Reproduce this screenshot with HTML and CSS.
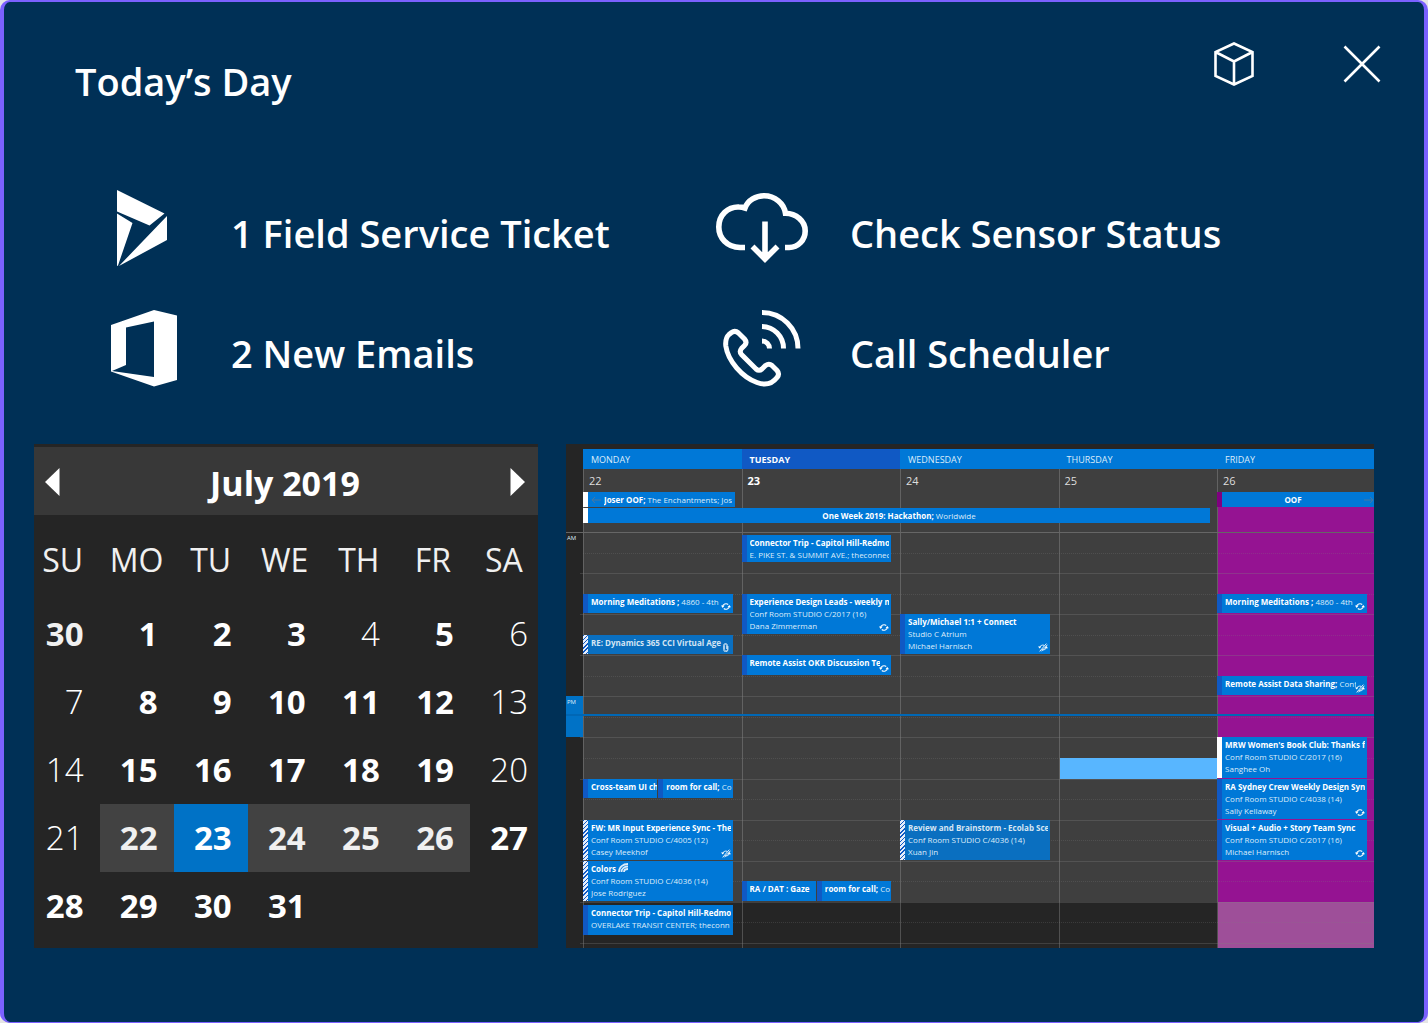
FILE: index.html
```html
<!DOCTYPE html>
<html lang="en">
<head>
<meta charset="utf-8">
<meta name="viewport" content="width=device-width, initial-scale=1">
<title>Today’s Day</title>
<link rel="stylesheet" href="styles.css">
</head>
<body>
<svg class="sprite" aria-hidden="true">
  <symbol id="sync" viewBox="0 0 18 16"><path d="M3 8a6 5 0 0 1 10-3.500M15 8a6 5 0 0 1-10 3.500" fill="none" stroke="currentColor" stroke-width="2"/><path d="M0 6h6.500L3 10.500zM11.500 9.500H18L15 5.500z" fill="currentColor"/></symbol>
  <symbol id="nosync" viewBox="0 0 18 16"><path d="M3 8a6 5 0 0 1 8-4M15 8a6 5 0 0 1-8 4M3 15 15 1M6 15 17 3" fill="none" stroke="currentColor" stroke-width="1.600"/><path d="M0 6h6L3 10zM12 9.500h6L15 5.500z" fill="currentColor"/></symbol>
  <symbol id="clip" viewBox="0 0 12 18"><path d="M9 5v8a3 3 0 0 1-6 0V4.500a2 2 0 0 1 4 0V12M9 5a4 4 0 0 0-8 0v8a4.500 4.500 0 0 0 9 0V6" fill="none" stroke="currentColor" stroke-width="1.300"/></symbol>
</svg>
<main class="card">
  <header class="card-head">
    <h1>Today’s Day</h1>
    <div class="tools">
      <button type="button" aria-label="Show model"><svg width="44" height="44" viewBox="0 0 44 44"><path d="M22 1.500 40.500 10v24L22 42.500 3.500 34V10zM3.500 10 22 19.500 40.500 10M22 19.500v23" fill="none" stroke="currentColor" stroke-width="2.600"/></svg></button>
      <button type="button" aria-label="Close"><svg width="44" height="44" viewBox="0 0 44 44"><path d="M4.500 4.500 39.500 39.500M39.500 4.500 4.500 39.500" fill="none" stroke="currentColor" stroke-width="2.600"/></svg></button>
    </div>
  </header>

  <nav class="actions" aria-label="Tasks">
    <a href="#ticket"><svg viewBox="0 0 96 96"><path d="M22 10 69.500 33.500 54.500 45.500 22 31.500zM22 33.500 37.500 43 23 85.500 22 86zM72 36v24L24 86z" fill="currentColor"/></svg><span>1 Field Service Ticket</span></a>
    <a href="#sensor"><svg viewBox="0 0 96 96"><path d="M31 67.500H26C13 67 4.800 58 4.800 47 4.800 35 14 26.500 25 27c2.500 0 4 .300 6 1 3-8 11-12.200 19-12.200 11 0 20 7.500 21.500 17.500C82 33.500 91.200 41 91.200 51c0 9-7.200 16.500-16 16.500H71" fill="none" stroke="currentColor" stroke-width="5.600"/><path d="M51 41.500V79M38.500 66.500 51 79 63.500 66.500" fill="none" stroke="currentColor" stroke-width="5.600"/></svg><span>Check Sensor Status</span></a>
    <a href="#mail"><svg viewBox="0 0 96 96"><path fill-rule="evenodd" d="M16 25 59 10 82 15.500V80L59 86.500 16 71.500zM31 27.500V65L17 71 59 77V21.500z" fill="currentColor"/></svg><span>2 New Emails</span></a>
    <a href="#call"><svg viewBox="0 0 96 96"><path d="M15 34.500 17.500 32.500q3.500-2.500 7 .500L30.500 39q3 3.500 0 6.500L27.500 48.500q-2.500 3 0 6L42 69q3 2.500 6 0L51.500 65.500q3.500-2.500 6.500 0L63 70.500q3 3.500 0 7C58 84 51 85.500 43 82.500 28 77 14 61 11.800 46 11.300 41 12.300 37 15 34.500z" fill="none" stroke="currentColor" stroke-width="5"/><path d="M48 12.500A36 36 0 0 1 84 48.500M48 26.500A22 22 0 0 1 69.500 48.500M48 41a7.500 7.500 0 0 1 7.500 7.500" fill="none" stroke="currentColor" stroke-width="5"/></svg><span>Call Scheduler</span></a>
  </nav>

  <div class="panels">
    <section class="month" aria-label="Month">
      <div class="month-head">
        <button type="button" aria-label="Previous month"><svg width="16" height="28" viewBox="0 0 16 28"><path d="M15.500 0v28L1 14z" fill="currentColor"/></svg></button>
        <h2>July 2019</h2>
        <button type="button" aria-label="Next month"><svg width="16" height="28" viewBox="0 0 16 28"><path d="M.500 0v28L15 14z" fill="currentColor"/></svg></button>
      </div>
      <table>
        <colgroup><col class="edge"><col class="mid"><col class="mid"><col class="mid"><col class="mid"><col class="mid"><col></colgroup>
        <thead><tr><th>SU</th><th>MO</th><th>TU</th><th>WE</th><th>TH</th><th>FR</th><th>SA</th></tr></thead>
        <tbody>
          <tr><td class="busy dim">30</td><td class="busy">1</td><td class="busy">2</td><td class="busy">3</td><td>4</td><td class="busy">5</td><td>6</td></tr>
          <tr><td>7</td><td class="busy">8</td><td class="busy">9</td><td class="busy">10</td><td class="busy">11</td><td class="busy">12</td><td>13</td></tr>
          <tr><td>14</td><td class="busy">15</td><td class="busy">16</td><td class="busy">17</td><td class="busy">18</td><td class="busy">19</td><td>20</td></tr>
          <tr><td>21</td><td class="busy week">22</td><td class="busy today">23</td><td class="busy week">24</td><td class="busy week">25</td><td class="busy week">26</td><td class="busy">27</td></tr>
          <tr><td class="busy">28</td><td class="busy">29</td><td class="busy">30</td><td class="busy">31</td><td></td><td></td><td></td></tr>
        </tbody>
      </table>
    </section>

    <section class="schedule" aria-label="Week">
      <div class="week-head">
        <i class="bg mon"></i><i class="bg tue"></i><i class="bg wed"></i><i class="bg thu"></i><i class="bg fri away"></i>
        <h3 class="mon">MONDAY</h3><h3 class="tue now">TUESDAY</h3><h3 class="wed">WEDNESDAY</h3><h3 class="thu">THURSDAY</h3><h3 class="fri">FRIDAY</h3>
        <p class="date mon">22</p><p class="date tue now">23</p><p class="date wed">24</p><p class="date thu">25</p><p class="date fri">26</p>
        <div class="allday first mon free"><svg width="10" height="8" viewBox="0 0 10 8"><path d="M10 4H1M4 1 1 4l3 3" fill="none" stroke="currentColor"/></svg><p><b>Joser OOF;</b> The Enchantments; Jos</p></div>
        <div class="allday second long free"><p><b>One Week 2019: Hackathon;</b> Worldwide</p></div>
        <div class="allday first fri oof"><p><b>OOF</b></p><svg width="10" height="8" viewBox="0 0 10 8"><path d="M0 4h9M6 1l3 3-3 3" fill="none" stroke="currentColor"/></svg></div>
      </div>
      <div class="week-body">
        <i class="bg mon"></i><i class="bg tue"></i><i class="bg wed"></i><i class="bg thu"></i><i class="bg fri away"></i>
        <i class="off mon"></i><i class="off tue"></i><i class="off wed"></i><i class="off thu"></i><i class="off fri away"></i>
        <i class="hour first-hour" style="--at:1"></i><i class="hour" style="--at:13"></i><i class="hour" style="--at:25"></i><i class="hour" style="--at:37"></i><i class="hour" style="--at:49"></i><i class="hour" style="--at:61"></i><i class="hour" style="--at:73"></i><i class="hour" style="--at:85"></i><i class="hour" style="--at:97"></i><i class="hour" style="--at:109"></i><i class="hour" style="--at:121"></i>
        <i class="half" style="--at:7"></i><i class="half" style="--at:19"></i><i class="half" style="--at:31"></i><i class="half" style="--at:43"></i><i class="half" style="--at:55"></i><i class="half" style="--at:67"></i><i class="half" style="--at:79"></i><i class="half" style="--at:91"></i><i class="half" style="--at:103"></i><i class="half" style="--at:115"></i>
        <span class="time" style="--at:1;--len:12">AM</span>
        <span class="time current" style="--at:49;--len:12">PM</span>
        <i class="slot thu" style="--at:67;--len:6"></i>
        <i class="nowline" style="--at:54"></i>

        <article class="event line mon" style="--at:19;--len:6"><p><b>Morning Meditations ;</b> 4860 - 4th</p><svg><use href="#sync"/></svg></article>
        <article class="event line mon tentative faded" style="--at:31;--len:6"><p><b>RE: Dynamics 365 CCI Virtual Age</b></p><svg><use href="#clip"/></svg></article>
        <div class="pair mon" style="--at:73;--len:6">
          <article class="event"><p><b>Cross-team UI ch</b></p></article>
          <article class="event"><p><b>room for call;</b> Co</p></article>
        </div>
        <article class="event mon tentative" style="--at:85;--len:12"><p><b>FW: MR Input Experience Sync - The</b></p><p>Conf Room STUDIO C/4005 (12)</p><p>Casey Meekhof</p><svg><use href="#nosync"/></svg></article>
        <article class="event mon tentative" style="--at:97;--len:12"><p><b>Colors</b> <svg class="rainbow" viewBox="0 0 11 10"><path d="M1 9C1 4 5 1 10 1M3.500 9C3.500 6 6 3.500 10 3.500M6 9c0-2 2-3 4-3" fill="none" stroke="currentColor" stroke-width="1.800"/></svg></p><p>Conf Room STUDIO C/4036 (14)</p><p>Jose Rodriguez</p></article>
        <article class="event mon" style="--at:110;--len:9"><p><b>Connector Trip - Capitol Hill-Redmo</b></p><p>OVERLAKE TRANSIT CENTER; theconn</p></article>

        <article class="event tue" style="--at:2;--len:8"><p><b>Connector Trip - Capitol Hill-Redmo</b></p><p>E. PIKE ST. &amp; SUMMIT AVE.; theconnec</p></article>
        <article class="event tue" style="--at:19;--len:12"><p><b>Experience Design Leads - weekly m</b></p><p>Conf Room STUDIO C/2017 (16)</p><p>Dana Zimmerman</p><svg><use href="#sync"/></svg></article>
        <article class="event line tue" style="--at:37;--len:6"><p><b>Remote Assist OKR Discussion Tea</b></p><svg><use href="#sync"/></svg></article>
        <div class="pair tue" style="--at:103;--len:6">
          <article class="event"><p><b>RA / DAT : Gaze</b></p></article>
          <article class="event"><p><b>room for call;</b> Co</p></article>
        </div>

        <article class="event wed" style="--at:25;--len:12"><p><b>Sally/Michael 1:1 + Connect</b></p><p>Studio C Atrium</p><p>Michael Harnisch</p><svg><use href="#nosync"/></svg></article>
        <article class="event wed tentative faded" style="--at:85;--len:12"><p><b>Review and Brainstorm - Ecolab Scer</b></p><p>Conf Room STUDIO C/4036 (14)</p><p>Xuan Jin</p></article>

        <article class="event line fri" style="--at:19;--len:6"><p><b>Morning Meditations ;</b> 4860 - 4th</p><svg><use href="#sync"/></svg></article>
        <article class="event line fri" style="--at:43;--len:6"><p><b>Remote Assist Data Sharing;</b> Conf</p><svg><use href="#nosync"/></svg></article>
        <article class="event fri free" style="--at:61;--len:12"><p><b>MRW Women's Book Club: Thanks f</b></p><p>Conf Room STUDIO C/2017 (16)</p><p>Sanghee Oh</p></article>
        <article class="event fri" style="--at:73;--len:12"><p><b>RA Sydney Crew Weekly Design Sync</b></p><p>Conf Room STUDIO C/4038 (14)</p><p>Sally Kellaway</p><svg><use href="#sync"/></svg></article>
        <article class="event fri" style="--at:85;--len:12"><p><b>Visual + Audio + Story Team Sync</b></p><p>Conf Room STUDIO C/2017 (16)</p><p>Michael Harnisch</p><svg><use href="#sync"/></svg></article>
      </div>
    </section>
  </div>
</main>
</body>
</html>
```
FILE: styles.css
```css
* { box-sizing: border-box; }
body {
  margin: 0;
  background: #e5e5e5;
  color: #fff;
  font-family: "Open Sans", "Noto Sans", sans-serif;
}
h1, h2, h3, p { margin: 0; font-weight: inherit; font-size: inherit; }
button { padding: 0; border: 0; background: none; color: inherit; font: inherit; cursor: pointer; }
svg { display: block; flex: none; }
.sprite { position: absolute; width: 0; height: 0; }

.card {
  min-height: 100vh;
  padding: 40px 50px 73px 30px;
  border: solid #7b61ff;
  border-width: 2px 4px 1px;
  border-radius: 10px;
  background: #003056;
}
.card-head { display: flex; justify-content: space-between; padding-left: 41px; }
h1 { padding-top: 11px; font-size: 38px; line-height: 56px; font-weight: 600; }
.tools { display: flex; gap: 84px; align-self: flex-start; margin-right: -10px; }

.actions {
  display: grid;
  grid-template-columns: 619fr 660fr;
  row-gap: 24px;
  margin-top: 71px;
  padding-left: 61px;
}
.actions a {
  display: flex;
  align-items: center;
  gap: 40px;
  color: inherit;
  font-size: 38px;
  line-height: 56px;
  font-weight: 600;
  text-decoration: none;
}
.actions svg { width: 96px; height: 96px; }
.actions span { padding-top: 10px; white-space: nowrap; }

.panels {
  display: grid;
  grid-template-columns: minmax(0, 504fr) minmax(0, 808fr);
  gap: 28px;
  margin-top: 48px;
}

.month { padding: 3px 0 8px; background: #252525; }
.month-head {
  display: flex;
  align-items: center;
  justify-content: space-between;
  height: 68px;
  padding: 4px 12px 0 10px;
  background: #383838;
}
.month-head button { padding-bottom: 2px; }
h2 { font-size: 34px; line-height: 48px; font-weight: 700; }
.month table { width: 100%; border-collapse: collapse; table-layout: fixed; }
.edge { width: 13%; }
.mid { width: 14.7%; }
.month th { height: 85px; padding: 4px 0 0; font-size: 32px; font-weight: 400; color: #f0f0f0; }
.month th:first-child { padding-right: 8px; }
.month td { height: 68px; padding: 0 16px 0 0; font-size: 33px; line-height: 48px; text-align: right; font-weight: 300; }
.month td:last-child { padding-right: 10px; }
.month td.busy { font-weight: 700; }
.month td.dim { color: #f0f0f0; }
.month td.week { background: #424242; color: #f0f0f0; }
.month td.today { background: #0072c6; }

.schedule {
  padding-top: 5px;
  background: #252525;
  font-size: 8px;
  line-height: 12px;
  color: #dcecfa;
  overflow: hidden;
}
.week-head, .week-body { display: grid; grid-template-columns: 17px repeat(4, 100fr) 99fr; }
.week-head > *, .week-body > * { min-width: 0; }
.week-head { grid-template-rows: 20px 23px 16px 16px 8px; }
.week-body { grid-template-rows: repeat(120, minmax(0, 1fr)) 5px; height: 416px; }
.mon { grid-column: 2; }
.tue { grid-column: 3; }
.wed { grid-column: 4; }
.thu { grid-column: 5; }
.fri { grid-column: 6; }
.bg { grid-row: 1 / -1; border-left: 1px solid #626262; background: #3f3f3f; }
.week-head .bg { grid-row: 2 / -1; }
.bg.away { background: #951392; }
.week-head .away { grid-row: 3 / -1; }
h3 { grid-row: 1; padding-left: 8px; background: #0078d7; font-size: 9px; line-height: 21px; }
h3.now { background: #1059c4; color: #fff; font-weight: 700; }
.date { grid-row: 2; padding-left: 6px; font-size: 11px; line-height: 24px; color: #dedede; }
.date.fri { border-left: 1px solid #626262; background: #3f3f3f; padding-left: 5px; }
.date.now { color: #fff; font-weight: 700; }
b { color: #fff; font-weight: 700; }

.allday {
  display: flex;
  align-items: center;
  gap: 3px;
  height: 15px;
  margin-right: 7px;
  padding: 0 3px;
  border-left: 5px solid #1059c4;
  background: #0078d7;
  white-space: nowrap;
}
.allday svg { color: #48779f; }
.allday p { overflow: hidden; }
.first { grid-row: 3; }
.second { grid-row: 4; }
.long { grid-column: 2 / 6; justify-content: center; }
.oof { margin-right: 0; border-left-color: #800080; padding-right: 0; }
.oof p { flex: 1; text-align: center; }

.hour, .half { grid-row: var(--at); height: 1px; background: rgba(128, 128, 128, .3); }
.hour { grid-column: 1 / -1; margin-left: 14px; }
.half { grid-column: 2 / -1; height: 0; background: none; border-top: 1px dotted rgba(128, 128, 128, .25); }
.first-hour { margin-left: 0; background: #666; }
.off { grid-row: 109 / -1; border-left: 1px solid #505050; background: #252525; }
.off.away { background: #9e4f99; }
.time { grid-column: 1; grid-row: var(--at) / span var(--len); padding-left: 1px; font-size: 6px; }
.time.current { background: #0072c6; }
.slot { grid-row: var(--at) / span var(--len); margin-left: 1px; background: #58b6ff; }
.nowline { grid-row: var(--at); grid-column: 1 / -1; height: 2px; background: #0067b5; }

.event, .pair { grid-row: var(--at) / span var(--len); margin: 0 9px 1px 0; }
.event.fri { margin-right: 7px; }
.event {
  position: relative;
  padding: 2px 2px 0 3px;
  border-left: 5px solid #1059c4;
  background: #0078d7;
  overflow: hidden;
}
.event p { overflow: hidden; white-space: nowrap; }
.event.line { padding-right: 11px; }
.pair { display: grid; grid-template-columns: 1fr 1fr; gap: 1px; }
.pair .event { grid-row: 1; margin: 0; padding-right: 0; }
.event > svg { position: absolute; right: 2px; bottom: 2px; width: 10px; height: 9px; color: #fff; }
.event.faded { background: #0a6fc0; }
.event.faded b { color: #d5e5f3; }
.event.free, .allday.free { border-left-color: #fff; }
.event.tentative {
  padding-left: 8px;
  border-left: 0;
  background: repeating-linear-gradient(135deg, #1059c4 0 1px, #e6eefa 1px 3px) left / 5px 100% no-repeat #0078d7;
}
.event.tentative.faded { background-color: #0a6fc0; }
.rainbow { display: inline-block; width: 11px; height: 10px; vertical-align: -1px; }
```
